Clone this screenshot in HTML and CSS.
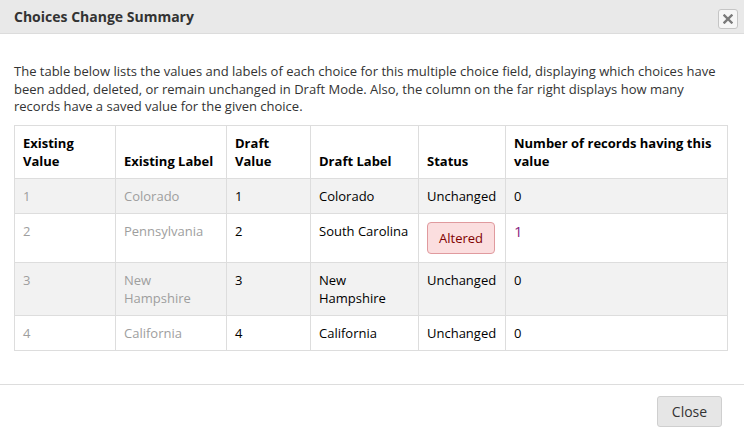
FILE: index.html
```html
<!DOCTYPE html>
<html lang="en">
<head>
    <meta charset="UTF-8">
    <title>Choices Change Summary</title>
    <link rel="stylesheet" href="styles.css">
</head>
<body>
    <div class="dialog">
        <div class="dialog-title">
            <span class="title-text">Choices Change Summary</span>
            <button class="title-close" title="Close">
                <svg width="10" height="10" viewBox="0 0 10 10"><path d="M1.5 1.5 L8.5 8.5 M8.5 1.5 L1.5 8.5" stroke="#7a7a7a" stroke-width="2.4" stroke-linecap="square"/></svg>
            </button>
        </div>
        <div class="dialog-content">
            <p class="intro">The table below lists the values and labels of each choice for this multiple choice field, displaying which choices have been added, deleted, or remain unchanged in Draft Mode. Also, the column on the far right displays how many records have a saved value for the given choice.</p>
            <table class="choices">
                <colgroup>
                    <col class="c-ev"><col class="c-el"><col class="c-dv"><col class="c-dl"><col class="c-st"><col class="c-num">
                </colgroup>
                <thead>
                    <tr>
                        <th>Existing Value</th>
                        <th>Existing Label</th>
                        <th>Draft Value</th>
                        <th>Draft Label</th>
                        <th>Status</th>
                        <th>Number of records having this value</th>
                    </tr>
                </thead>
                <tbody>
                    <tr>
                        <td class="old">1</td>
                        <td class="old">Colorado</td>
                        <td>1</td>
                        <td>Colorado</td>
                        <td>Unchanged</td>
                        <td>0</td>
                    </tr>
                    <tr>
                        <td class="old">2</td>
                        <td class="old">Pennsylvania</td>
                        <td>2</td>
                        <td>South Carolina</td>
                        <td><span class="badge-altered">Altered</span></td>
                        <td><span class="count-link">1</span></td>
                    </tr>
                    <tr>
                        <td class="old">3</td>
                        <td class="old">New Hampshire</td>
                        <td>3</td>
                        <td>New Hampshire</td>
                        <td>Unchanged</td>
                        <td>0</td>
                    </tr>
                    <tr>
                        <td class="old">4</td>
                        <td class="old">California</td>
                        <td>4</td>
                        <td>California</td>
                        <td>Unchanged</td>
                        <td>0</td>
                    </tr>
                </tbody>
            </table>
        </div>
        <div class="dialog-buttons">
            <button class="btn-close">Close</button>
        </div>
    </div>
</body>
</html>
```

FILE: styles.css
```css
body {
    margin: 0;
    background-color: #fff;
    font-family: "Open Sans", Arial, sans-serif;
    color: #000;
}
.dialog {
    width: 744px;
}
.dialog-title {
    display: flex;
    justify-content: space-between;
    align-items: center;
    height: 33px;
    padding: 0 6px 0 14px;
    background-color: #e9e9e9; /* jQuery UI style title bar */
    border-bottom: 1px solid #dcdcdc;
}
.title-text {
    font-size: 14px;
    font-weight: bold;
    color: #333;
}
.title-close {
    display: flex;
    align-items: center;
    justify-content: center;
    width: 20px;
    height: 20px;
    padding: 0;
    margin-top: 4px;
    border: 1px solid #c5c5c5;
    border-radius: 3px;
    background-color: #f6f6f6;
}
.dialog-content {
    padding: 29px 14px 33px 14px;
}
.intro {
    margin: 0 0 9px 0;
    font-size: 13px;
    line-height: 17.5px;
    color: #333;
}
table.choices {
    width: 713px;
    border-collapse: collapse;
    table-layout: fixed;
    font-size: 13px;
    line-height: 18px;
}
.c-ev { width: 101px; }
.c-el { width: 111px; }
.c-dv { width: 84px; }
.c-dl { width: 108px; }
.c-st { width: 87px; }
.c-num { width: 222px; }
.choices th, .choices td {
    border: 1px solid #ddd;
    padding: 8px 8px;
    text-align: left;
    vertical-align: top;
}
.choices th {
    vertical-align: bottom;
    font-weight: bold;
}
.choices tbody tr:nth-child(odd) {
    background-color: #f2f2f2;
}
.choices td.old {
    color: #9e9e9e;
}
.badge-altered {
    display: inline-block;
    padding: 6px 11px;
    border: 1px solid #e09a9e;
    border-radius: 4px;
    background-color: #fbdedf;
    color: #800000;
}
.count-link {
    font-size: 15px;
    color: #8b1f7f;
}
.dialog-buttons {
    display: flex;
    justify-content: flex-end;
    padding: 11px 22px 16px 0;
    border-top: 1px solid #ddd;
}
.btn-close {
    width: 65px;
    height: 31px;
    font-family: "Open Sans", Arial, sans-serif;
    font-size: 14px;
    color: #333;
    background-color: #e6e6e6;
    border: 1px solid #cfcfcf;
    border-radius: 3px;
}
```
